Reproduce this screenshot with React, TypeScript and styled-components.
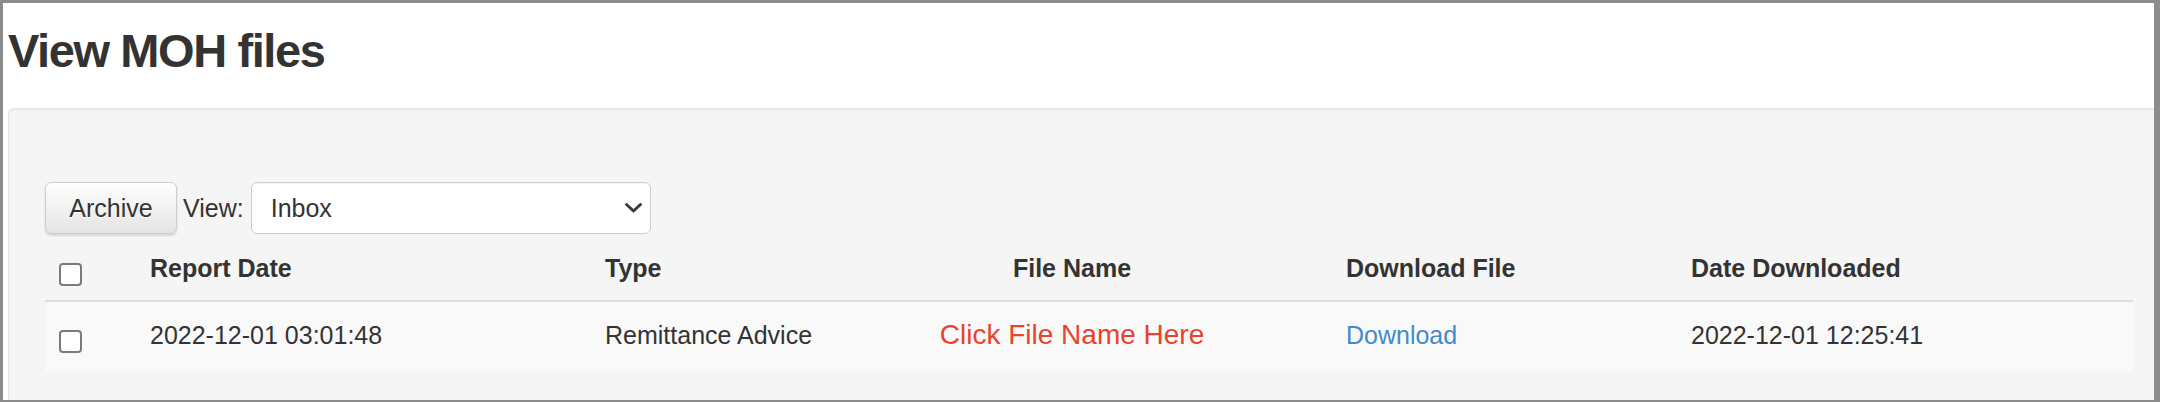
import React from "react";
import styled, { createGlobalStyle } from "styled-components";

const GlobalStyle = createGlobalStyle`
  html, body {
    margin: 0;
    padding: 0;
    background: #ffffff;
  }
  body {
    font-family: "Liberation Sans", Arial, Helvetica, sans-serif;
    font-size: 25px;
    line-height: 36px;
    color: #333333;
  }
  * { box-sizing: border-box; }
`;

const Frame = styled.div`
  height: 402px;
  overflow: hidden;
  border-style: solid;
  border-color: #8c8c8c;
  border-width: 3px 6px 2px 3px;
  background: #ffffff;
  padding-left: 5px;
  display: flex;
  flex-direction: column;
`;

const Title = styled.h1`
  margin: 22px 0 31px;
  font-size: 47px;
  line-height: 52px;
  font-weight: 700;
  letter-spacing: -1.4px;
  color: #333333;
`;

const Well = styled.section`
  flex: 1;
  background: #f5f5f5;
  border: 1px solid #e3e3e3;
  border-right: none;
  border-bottom: none;
  border-radius: 6px 0 0 0;
  box-shadow: inset 0 1px 2px rgba(0, 0, 0, 0.05);
  padding: 73px 21px 0 36px;
`;

const Toolbar = styled.div`
  display: flex;
  align-items: center;
  height: 52px;
`;

const Button = styled.button`
  height: 52px;
  width: 132px;
  padding: 0;
  font-family: inherit;
  font-size: 25px;
  color: #333333;
  background: linear-gradient(to bottom, #ffffff 0%, #e4e4e4 100%);
  border: 1px solid #cccccc;
  border-radius: 6px;
  box-shadow: 0 2px 2px rgba(0, 0, 0, 0.12), inset 0 1px 0 rgba(255, 255, 255, 0.3);
  text-shadow: 0 1px 0 #ffffff;
`;

const Label = styled.label`
  margin: 0 7px 0 6px;
  font-size: 25px;
  line-height: 36px;
  color: #333333;
`;

const SelectWrap = styled.div`
  position: relative;
  width: 400px;
  height: 52px;
`;

const Select = styled.select`
  appearance: none;
  -webkit-appearance: none;
  width: 100%;
  height: 100%;
  padding: 0 40px 0 19px;
  font-family: inherit;
  font-size: 25px;
  color: #333333;
  background: #ffffff;
  border: 1px solid #cccccc;
  border-radius: 6px;
  box-shadow: inset 0 1px 1px rgba(0, 0, 0, 0.04);
`;

const Chevron = styled.svg`
  position: absolute;
  right: 8px;
  top: 20px;
  width: 19px;
  height: 12px;
  pointer-events: none;
`;

const Table = styled.table`
  margin-top: 2px;
  width: 100%;
  border-collapse: collapse;
  table-layout: fixed;
`;

const HeadCell = styled.th<{ $center?: boolean }>`
  padding: 14px;
  line-height: 36px;
  font-size: 25px;
  font-weight: 700;
  color: #333333;
  white-space: nowrap;
  vertical-align: top;
  text-align: ${(p) => (p.$center ? "center" : "left")};
  border-bottom: 2px solid #dddddd;
`;

const BodyRow = styled.tr`
  background: #f9f9f9;
`;

const Cell = styled.td<{ $center?: boolean }>`
  padding: 15px 14px;
  line-height: 36px;
  font-size: 25px;
  color: #333333;
  white-space: nowrap;
  vertical-align: top;
  text-align: ${(p) => (p.$center ? "center" : "left")};
`;

const Check = styled.input.attrs({ type: "checkbox" })`
  appearance: none;
  -webkit-appearance: none;
  display: block;
  width: 23px;
  height: 23px;
  margin: 13px 0 0;
  background: #ffffff;
  border: 2px solid #7a7a7a;
  border-radius: 4px;
`;

const Hint = styled.span`
  font-size: 28px;
  color: #e8432d;
  vertical-align: 3px;
`;

const Link = styled.a`
  color: #428bca;
  text-decoration: none;
`;

const columns = [91, 455, 221, 520, 345, null];

export default function App() {
  return (
    <>
      <GlobalStyle />
      <Frame>
        <Title>View MOH files</Title>
        <Well>
          <Toolbar>
            <Button type="button">Archive</Button>
            <Label htmlFor="view-select">View:</Label>
            <SelectWrap>
              <Select id="view-select" defaultValue="Inbox">
                <option>Inbox</option>
                <option>Archive</option>
              </Select>
              <Chevron viewBox="0 0 19 12">
                <path d="M2.5 2.5 L9.5 9 L16.5 2.5" fill="none" stroke="#3a3a3a" strokeWidth="3" strokeLinecap="round" strokeLinejoin="round" />
              </Chevron>
            </SelectWrap>
          </Toolbar>
          <Table>
            <colgroup>
              {columns.map((w, i) => (
                <col key={i} style={w ? { width: `${w}px` } : undefined} />
              ))}
            </colgroup>
            <thead>
              <tr>
                <HeadCell><Check aria-label="Select all" /></HeadCell>
                <HeadCell>Report Date</HeadCell>
                <HeadCell>Type</HeadCell>
                <HeadCell $center>File Name</HeadCell>
                <HeadCell>Download File</HeadCell>
                <HeadCell>Date Downloaded</HeadCell>
              </tr>
            </thead>
            <tbody>
              <BodyRow>
                <Cell><Check aria-label="Select row" /></Cell>
                <Cell>2022-12-01 03:01:48</Cell>
                <Cell>Remittance Advice</Cell>
                <Cell $center><Hint>Click File Name Here</Hint></Cell>
                <Cell><Link href="#">Download</Link></Cell>
                <Cell>2022-12-01 12:25:41</Cell>
              </BodyRow>
            </tbody>
          </Table>
        </Well>
      </Frame>
    </>
  );
}
